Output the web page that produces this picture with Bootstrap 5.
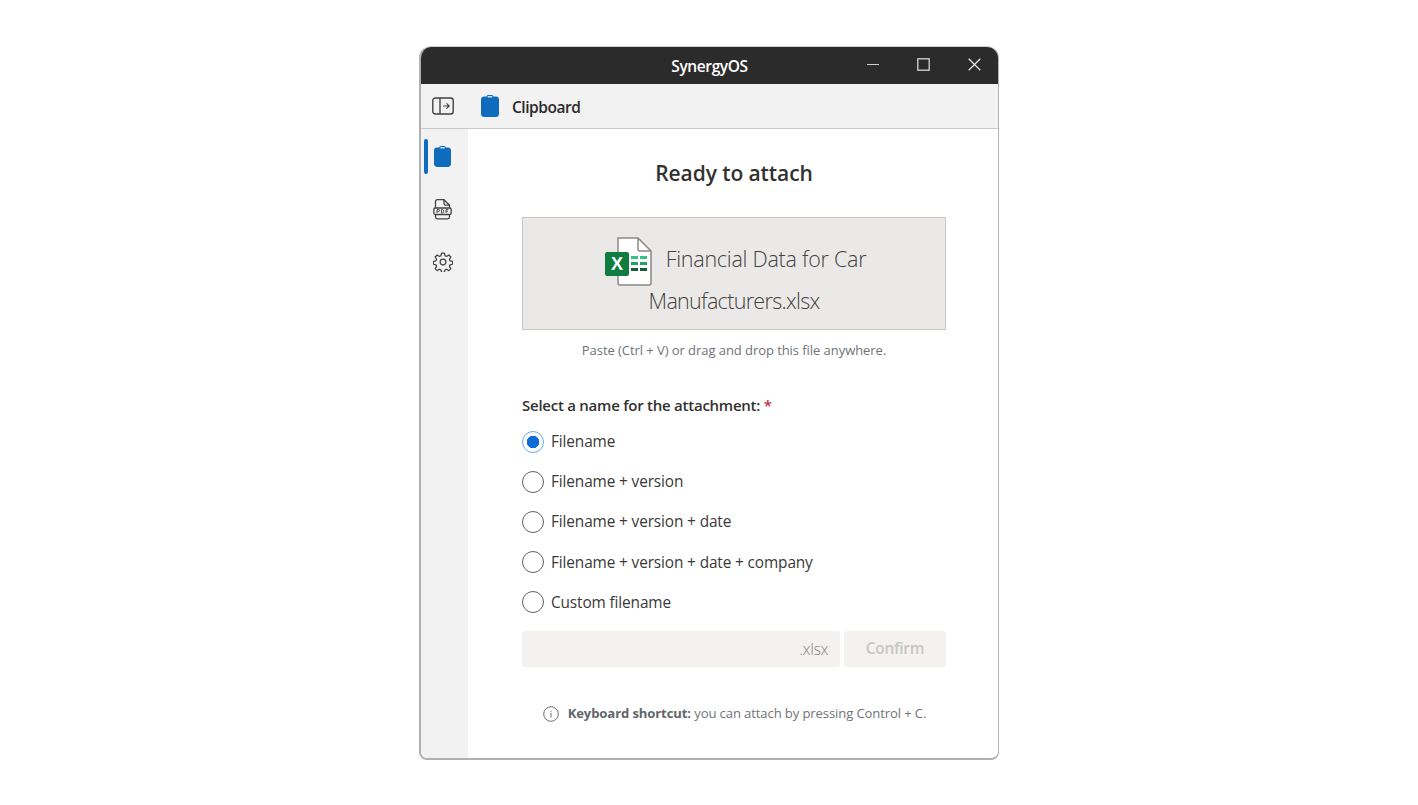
<!DOCTYPE html>
<html lang="en">
<head>
<meta charset="utf-8">
<title>SynergyOS</title>
<link href="https://cdn.jsdelivr.net/npm/bootstrap@5.3.0/dist/css/bootstrap.min.css" rel="stylesheet">
<style>
html,body{height:100%;background:#fff;overflow:hidden}
body{font-family:"Open Sans","Noto Sans",sans-serif;color:#323130;padding-top:46px}
.win{width:580px;height:714px;border:2px solid #b0b0b0;border-top:1px solid #cfcfcf;border-right-width:1px;border-radius:12px 12px 8px 8px;overflow:hidden;background:#fff}
.titlebar{height:37px;background:#2b2b2b;color:#fff;flex:none;position:relative}
.titletext{font-size:15.5px;font-weight:600;letter-spacing:-.4px;width:100%;text-align:center;padding-top:2px}
.winbtns{position:absolute;right:-2px;top:0;height:100%}
.winbtn{width:51px;height:100%;display:flex;align-items:center;justify-content:center;padding-bottom:3px}
.toolbar{height:45px;background:#f2f2f2;border-bottom:1.5px solid #c8c8c8;flex:none}
.tb-toggle{width:44px;flex:none}
.tb-clip{margin-left:16px}
.tb-title{font-size:15.5px;font-weight:600;letter-spacing:-.45px;color:#2b2b2b;margin-left:13px;padding-top:4px}
.rail{width:47px;background:#f2f2f2;flex:none;padding-top:9.5px}
.railitem{height:35px;margin-bottom:18px;position:relative;padding-right:4px}
.railbar{position:absolute;left:3px;top:0;width:3.5px;height:35px;background:#0f6cbd;border-radius:2px}
.pane{width:530px;padding-left:2px}
.inner{width:424px}
.head{font-size:21px;font-weight:600;letter-spacing:-.08px;color:#323130;margin:0;line-height:30px;padding-top:29px;height:87.5px}
.filebox{height:113px;background:#ebe9e7;border:1px solid #c8c6c4;font-size:21.5px;font-weight:300;letter-spacing:-.25px;line-height:42px;color:#424242;padding-top:20px}
.fileline{height:42px}
.fileline1{padding-left:3px;gap:12px}
.fileline1 svg{margin-top:6px;flex:none}
.fileline2{letter-spacing:-.68px}
.hint{font-size:13px;color:#6f7479;letter-spacing:-.06px;margin-top:11px;line-height:18px;height:47px}
.qlabel{font-size:15px;font-weight:600;letter-spacing:-.25px;line-height:22px;margin-top:6px;height:28px}
.req{color:#c4314b}
.opt{height:40.2px;font-size:15.4px;letter-spacing:-.13px;color:#3b3a39;gap:7px}
.opt .form-check-input{width:22px;height:22px;margin:0;border:1.5px solid #616161;background-color:#fff;flex:none}
.opt .form-check-input:checked{border:1.5px solid #62adec;background-image:radial-gradient(circle,#0f6cd6 0 6px,transparent 6.5px);background-color:#fff}
.custom{height:36px;gap:4px;margin-top:8.5px}
.fakeinput{background:#f3f2f1;border-radius:3px;flex:1;font-size:16px;letter-spacing:-.4px;color:#8a8886;padding-right:12px;font-weight:300}
.confirm:disabled{width:102px;height:36px;background:#f3f2f1;border:0;border-radius:3px;color:#c8c6c4;font-size:15.5px;font-weight:600;letter-spacing:-.3px;padding:0;opacity:1}
.note{font-size:13.1px;color:#6f7479;letter-spacing:-.12px;margin-top:36px;padding-left:1px;gap:9px;line-height:20px}
.note svg{margin-top:3px;flex:none}
.note b{font-weight:700;color:#62666a}
</style>
</head>
<body class="d-flex justify-content-center align-items-start">
<div class="win d-flex flex-column">
  <div class="titlebar d-flex align-items-center">
    <div class="titletext">SynergyOS</div>
    <div class="winbtns d-flex">
      <div class="winbtn"><svg width="12" height="13" viewBox="0 0 12 13"><path d="M0 6.5h12" stroke="#d0d0d0" stroke-width="1.2"/></svg></div>
      <div class="winbtn"><svg width="13" height="13" viewBox="0 0 13 13"><rect x=".8" y=".8" width="11.4" height="11.4" fill="none" stroke="#d6d6d6" stroke-width="1.3"/></svg></div>
      <div class="winbtn"><svg width="13" height="13" viewBox="0 0 13 13"><path d="M.7.7l11.6 11.6M12.3.7L.7 12.3" stroke="#e4e4e4" stroke-width="1.3"/></svg></div>
    </div>
  </div>
  <div class="toolbar d-flex align-items-center">
    <div class="tb-toggle d-flex justify-content-center align-items-center">
      <svg width="22" height="18" viewBox="0 0 22 18" fill="none" stroke="#424242" stroke-width="1.4"><rect x=".8" y="1" width="20.4" height="16" rx="2.5"/><path d="M8 1v16"/><path d="M11 9h6M14.5 6.3L17.2 9l-2.7 2.7" stroke-width="1.2"/></svg>
    </div>
    <svg class="tb-clip" width="18" height="22" viewBox="0 0 18 22"><path d="M5.5 1.5C5.7.6 6.5 0 7.4 0h3.2c.9 0 1.700.6 1.900 1.500H15c1.600 0 3 1.300 3 3V19c0 1.700-1.400 3-3 3H3c-1.600 0-3-1.300-3-3V4.500c0-1.700 1.400-3 3-3z" fill="#0f6cbd"/><rect x="6.500" y="1" width="5" height="1.600" rx=".8" fill="#cfe2f3"/></svg>
    <div class="tb-title">Clipboard</div>
  </div>
  <div class="d-flex flex-grow-1">
    <div class="rail d-flex flex-column">
      <div class="railitem d-flex justify-content-center align-items-center"><span class="railbar"></span>
        <svg width="17" height="21" viewBox="0 0 18 22"><path d="M5.500 1.500C5.700.6 6.500 0 7.400 0h3.200c.9 0 1.700.6 1.900 1.500H15c1.600 0 3 1.300 3 3V19c0 1.700-1.400 3-3 3H3c-1.600 0-3-1.300-3-3V4.500c0-1.700 1.400-3 3-3z" fill="#0f6cbd"/><rect x="6.500" y="1" width="5" height="1.600" rx=".8" fill="#cfe2f3"/></svg>
      </div>
      <div class="railitem d-flex justify-content-center align-items-center">
        <svg width="19" height="21" viewBox="0 0 19 21" fill="none" stroke="#424242" stroke-width="1.300"><path d="M2.500 9V2.500c0-1 .8-1.800 1.800-1.800h6.700l5.500 5.500V9"/><path d="M11 .8v4c0 .8.600 1.400 1.400 1.400h4"/><rect x=".8" y="9" width="17.400" height="6.500" rx="1.500"/><path d="M2.500 15.500v2.500c0 1 .8 1.800 1.800 1.800h10.400c1 0 1.800-.8 1.800-1.800v-2.500"/><path d="M4 14v-3.500h1.600a1 1 0 010 2H4M8.500 14v-3.500h.7a1.500 1.700 0 010 3.500zM13 14v-3.500h2.300M13 12.300h2" stroke-width=".9"/></svg>
      </div>
      <div class="railitem d-flex justify-content-center align-items-center">
        <svg width="20" height="20" viewBox="0 0 24 24" fill="none" stroke="#424242" stroke-width="1.500" stroke-linejoin="round"><circle cx="12" cy="12" r="3.400"/><path d="M10.300 1.400h3.400l.7 3.100 1.900.8 2.700-1.700 2.400 2.400-1.700 2.700.8 1.900 3.100.7-.1 3.400-3 .7-.8 1.900 1.700 2.700-2.400 2.400-2.700-1.700-1.900.8-.7 3h-3.400l-.7-3-1.900-.8-2.700 1.700-2.400-2.400 1.700-2.700-.8-1.900-3-.7v-3.400l3-.7.8-1.900-1.700-2.700 2.400-2.400 2.700 1.700 1.900-.8z"/></svg>
      </div>
    </div>
    <div class="pane d-flex justify-content-center">
      <div class="inner d-flex flex-column">
        <h1 class="head text-center">Ready to attach</h1>
        <div class="filebox text-center d-flex flex-column">
          <div class="fileline fileline1 d-flex justify-content-center align-items-center">
            <svg width="49" height="49" viewBox="0 0 49 49"><path d="M13 1h20l13 13v32a2 2 0 01-2 2H15a2 2 0 01-2-2z" fill="#fff" stroke="#8a8886" stroke-width="1.500"/><path d="M33 1v11a2 2 0 002 2h11" fill="none" stroke="#8a8886" stroke-width="1.500"/><rect x="0" y="15" width="24" height="24" rx="2" fill="#107c41"/><text x="12" y="33" text-anchor="middle" font-family="Liberation Sans" font-size="18" font-weight="700" fill="#fff">X</text><path d="M26 19h7v3h-7zM35 19h7v3h-7z" fill="#33c481"/><path d="M26 25h7v3h-7zM35 25h7v3h-7z" fill="#21a366"/><path d="M26 31h7v3h-7zM35 31h7v3h-7z" fill="#185c37"/></svg>
            <span>Financial Data for Car</span>
          </div>
          <div class="fileline fileline2">Manufacturers.xlsx</div>
        </div>
        <div class="hint text-center">Paste (Ctrl + V) or drag and drop this file anywhere.</div>
        <div class="qlabel">Select a name for the attachment: <span class="req">*</span></div>
        <label class="opt d-flex align-items-center"><input class="form-check-input" type="radio" name="n" checked>Filename</label>
        <label class="opt d-flex align-items-center"><input class="form-check-input" type="radio" name="n">Filename + version</label>
        <label class="opt d-flex align-items-center"><input class="form-check-input" type="radio" name="n">Filename + version + date</label>
        <label class="opt d-flex align-items-center"><input class="form-check-input" type="radio" name="n">Filename + version + date + company</label>
        <label class="opt d-flex align-items-center"><input class="form-check-input" type="radio" name="n">Custom filename</label>
        <div class="custom d-flex">
          <div class="fakeinput d-flex align-items-center justify-content-end">.xlsx</div>
          <button class="confirm btn" type="button" disabled>Confirm</button>
        </div>
        <div class="note d-flex justify-content-center align-items-center">
          <svg width="16" height="16" viewBox="0 0 16 16" fill="none" stroke="#6f6f6f"><circle cx="8" cy="8" r="7.300"/><path d="M8 7v4.500M8 4.500v1.200"/></svg>
          <span><b>Keyboard shortcut:</b> you can attach by pressing Control + C.</span>
        </div>
      </div>
    </div>
  </div>
</div>
</body>
</html>
